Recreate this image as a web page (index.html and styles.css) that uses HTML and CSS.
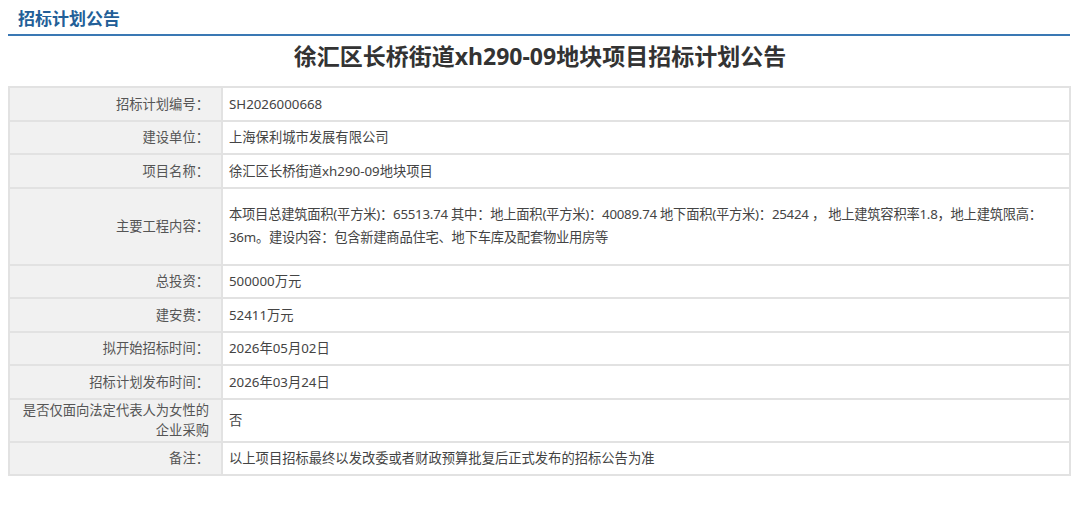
FILE: index.html
```html
<!DOCTYPE html>
<html lang="zh">
<head>
<meta charset="utf-8">
<link rel="stylesheet" href="styles.css">
</head>
<body>
<div class="page">
  <div class="section-head">
    <h2 class="section-title">招标计划公告</h2>
  </div>
  <h1 class="doc-title">徐汇区长桥街道xh290-09地块项目招标计划公告</h1>
  <table class="info">
    <tr><th>招标计划编号：</th><td>SH2026000668</td></tr>
    <tr><th>建设单位：</th><td>上海保利城市发展有限公司</td></tr>
    <tr><th>项目名称：</th><td>徐汇区长桥街道xh290-09地块项目</td></tr>
    <tr class="tall"><th>主要工程内容：</th><td class="content">本项目总建筑面积(平方米)：65513.74 其中：地上面积(平方米)：40089.74 地下面积(平方米)：25424 ， 地上建筑容积率1.8，地上建筑限高：36m。建设内容：包含新建商品住宅、地下车库及配套物业用房等</td></tr>
    <tr><th>总投资：</th><td>500000万元</td></tr>
    <tr><th>建安费：</th><td>52411万元</td></tr>
    <tr><th>拟开始招标时间：</th><td>2026年05月02日</td></tr>
    <tr><th>招标计划发布时间：</th><td>2026年03月24日</td></tr>
    <tr class="two"><th>是否仅面向法定代表人为女性的企业采购</th><td>否</td></tr>
    <tr><th>备注：</th><td>以上项目招标最终以发改委或者财政预算批复后正式发布的招标公告为准</td></tr>
  </table>
</div>
</body>
</html>
```

FILE: styles.css
```css
html, body {
  margin: 0;
  padding: 0;
  background: #ffffff;
}
body {
  font-family: "Noto Sans", "Noto Sans CJK SC", sans-serif;
  color: #333;
}
.page {
  padding: 0 8px 0 8px;
}
.section-head {
  border-bottom: 2px solid #3a78b4;
  height: 36px;
  box-sizing: border-box;
  padding-left: 10px;
  margin-right: 2px;
}
.section-title {
  margin: 0;
  font-size: 17px;
  line-height: 20px;
  padding-top: 9px;
  font-weight: bold;
  color: #235f98;
}
.doc-title {
  margin: 0;
  text-align: center;
  font-size: 23px;
  line-height: 30px;
  padding-top: 5px;
  height: 45px;
  box-sizing: content-box;
  font-weight: bold;
  color: #333;
}
.info {
  width: 1063px;
  margin-left: 0;
  border-collapse: collapse;
  font-size: 13.3px;
  border: 2px solid #dedede;
}
.info th, .info td {
  border: 2px solid #e2e2e2;
  height: 31.5px;
  padding: 0 6px;
  line-height: 20px;
}
.info th {
  width: 193px;
  background: #f1f1f1;
  color: #555;
  font-weight: normal;
  text-align: right;
  padding-right: 12px;
}
.info td {
  color: #444;
  text-align: left;
}
.info tr.tall th, .info tr.tall td {
  height: 75px;
}
.info td.content {
  line-height: 23px;
  padding-right: 10px;
  letter-spacing: -0.25px;
}
.info tr.two th, .info tr.two td {
  height: 41px;
}
```
